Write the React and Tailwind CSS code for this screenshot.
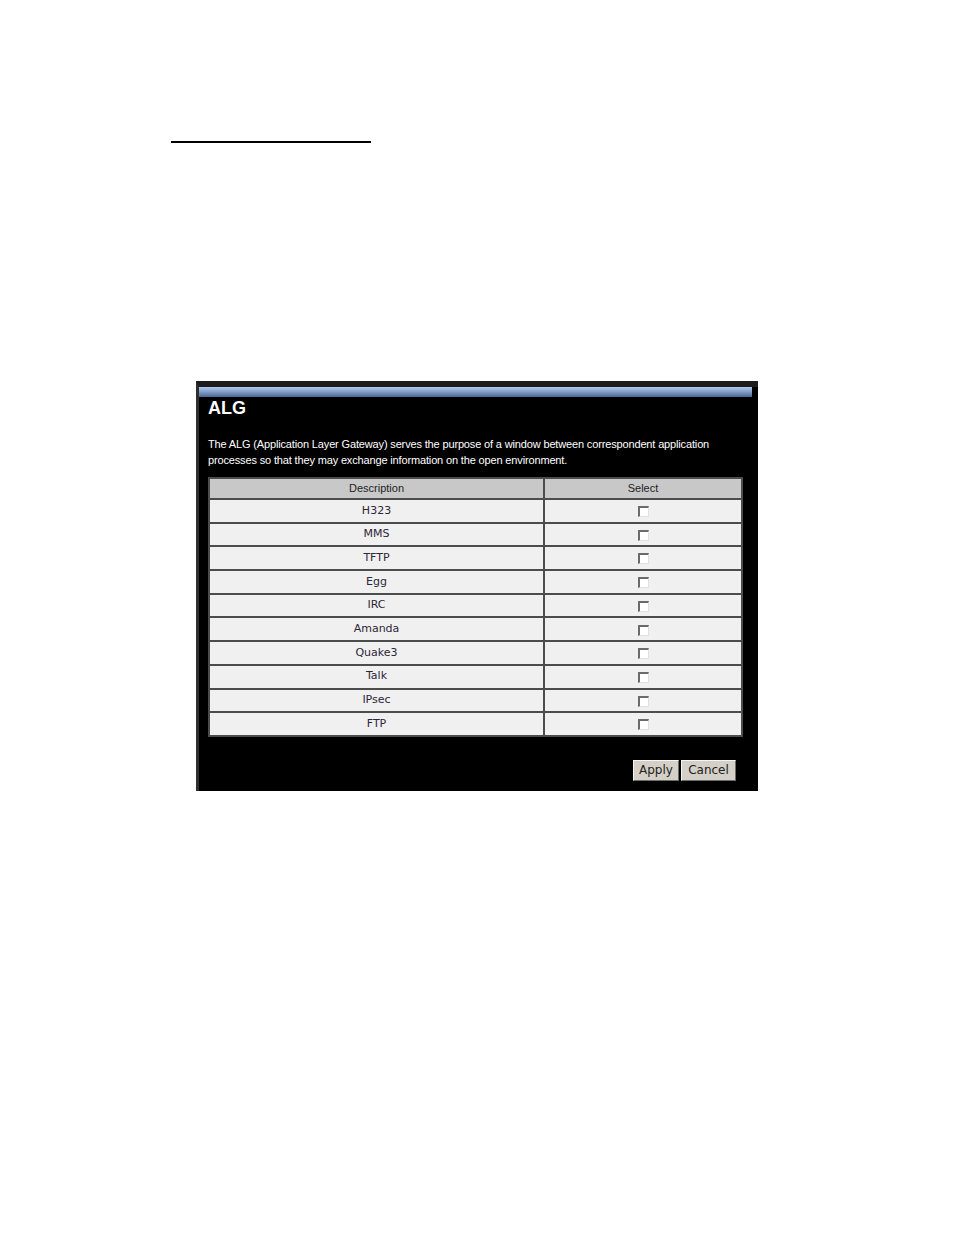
import React from "react";

const rows = ["H323", "MMS", "TFTP", "Egg", "IRC", "Amanda", "Quake3", "Talk", "IPsec", "FTP"];

function Checkbox() {
  return (
    <span className="inline-block w-[11px] h-[11px] bg-white border-t-2 border-l-2 border-t-[#6b6b6b] border-l-[#6b6b6b] border-r border-b border-r-[#e0e0e0] border-b-[#e0e0e0] align-middle" />
  );
}

export default function App() {
  return (
    <div className="w-[954px] h-[1235px] bg-white overflow-hidden" style={{ fontFamily: '"Liberation Sans", Arial, sans-serif' }}>
      <div className="pt-[141px] pl-[171px]">
        <div className="w-[200px] h-[2px] bg-black" />
      </div>
      <div className="mt-[238px] ml-[196px] w-[562px] h-[410px] bg-black border-t-[6px] border-t-[#1c1c1c] border-l-[3px] border-l-[#2e2e2e] flex flex-col">
        <div className="h-[10px] mr-[6px] bg-gradient-to-b from-[#b4c8ea] via-[#7f9cc8] to-[#4a6794]" />
        <div className="pl-[9px] pr-[12px]">
          <h1 className="text-white font-bold text-[18px] leading-[20px] mt-[1px]">ALG</h1>
          <p className="text-white text-[11px] leading-[16px] mt-[18px] tracking-[-0.15px]">
            The ALG (Application Layer Gateway) serves the purpose of a window between correspondent application
            <br />
            processes so that they may exchange information on the open environment.
          </p>
          <table className="mt-[9px] w-[535px] border-collapse">
            <thead>
              <tr className="bg-[#c8c8c8] h-[21px]">
                <th className="border-2 border-[#4c4c4c] font-normal text-[11px] text-[#1e1e1e] w-[335px]">Description</th>
                <th className="border-2 border-[#4c4c4c] font-normal text-[11px] text-[#1e1e1e]">Select</th>
              </tr>
            </thead>
            <tbody>
              {rows.map((r) => (
                <tr key={r} className="bg-[#f0f0f0] h-[23.7px]">
                  <td className="border-2 border-[#4c4c4c] text-center text-[11px] text-[#2e2638] p-0" style={{ fontFamily: '"DejaVu Sans", Tahoma, sans-serif' }}>
                    {r}
                  </td>
                  <td className="border-2 border-[#4c4c4c] text-center p-0 leading-none">
                    <Checkbox />
                  </td>
                </tr>
              ))}
            </tbody>
          </table>
          <div className="flex justify-end gap-[2px] mt-[23px] pr-[10px]">
            <button className="w-[46px] h-[21px] bg-[#d4d0c8] text-[12px] text-[#222] border border-t-[#f4f4f4] border-l-[#f4f4f4] border-r-[#6c6c6c] border-b-[#6c6c6c]" style={{ fontFamily: '"DejaVu Sans", Tahoma, sans-serif' }}>
              Apply
            </button>
            <button className="w-[55px] h-[21px] bg-[#d4d0c8] text-[12px] text-[#222] border border-t-[#f4f4f4] border-l-[#f4f4f4] border-r-[#6c6c6c] border-b-[#6c6c6c]" style={{ fontFamily: '"DejaVu Sans", Tahoma, sans-serif' }}>
              Cancel
            </button>
          </div>
        </div>
      </div>
    </div>
  );
}
